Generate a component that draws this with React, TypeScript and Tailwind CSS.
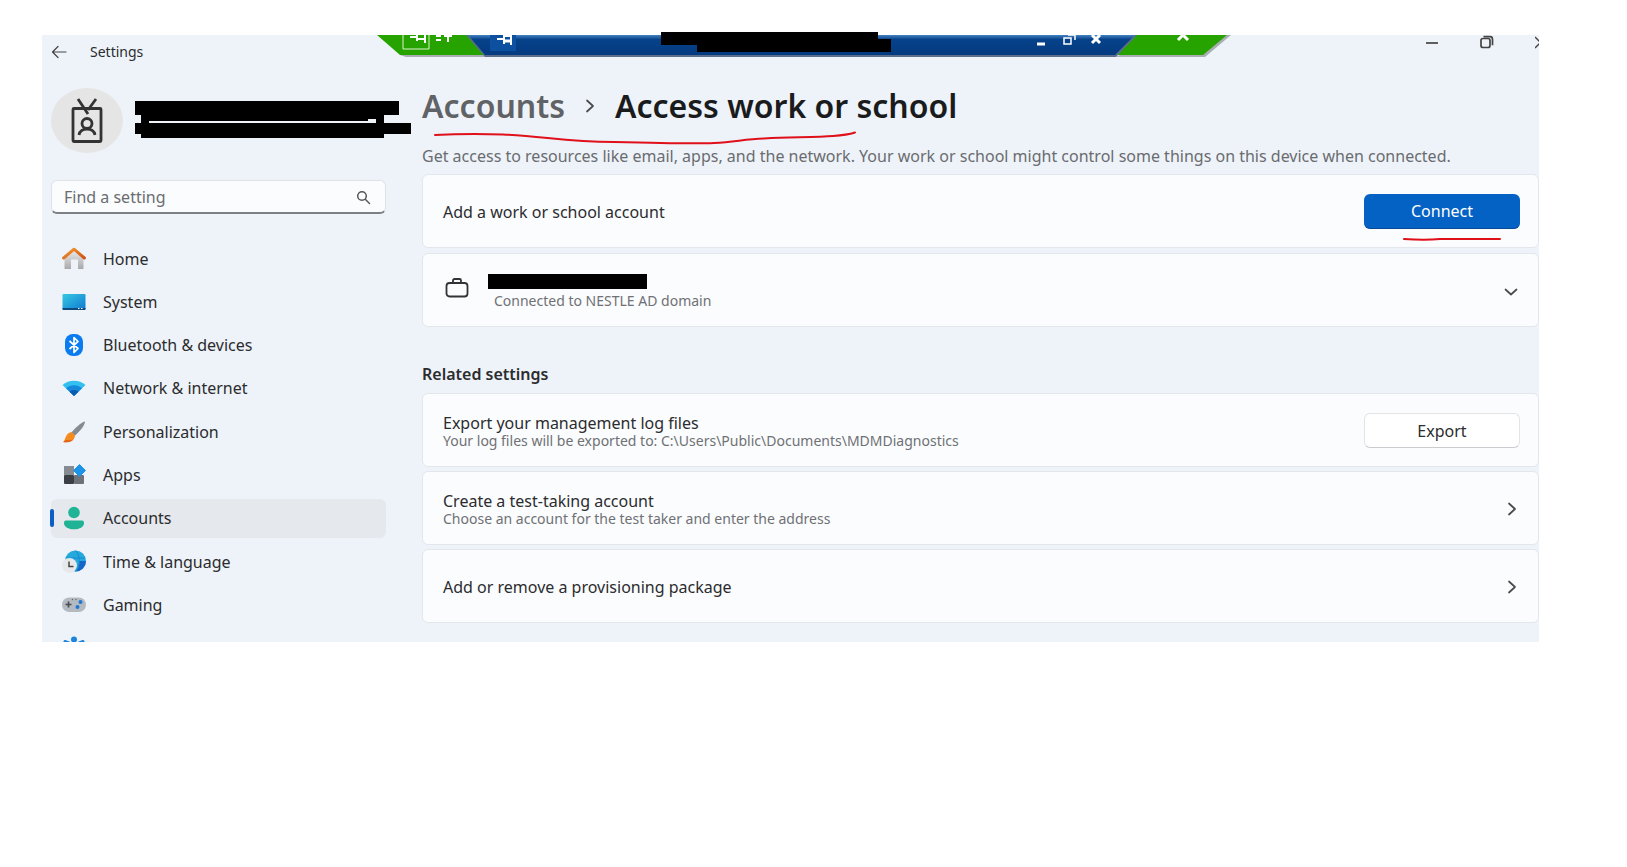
import { type ReactNode } from "react";

type NavItem = { label: string; icon: ReactNode };

const navItems: NavItem[] = [
  {
    label: "Home",
    icon: (
      <svg viewBox="0 0 24 24" className="size-6">
        <defs>
          <linearGradient id="wall" x1="0" y1="0" x2="0" y2="1">
            <stop offset="0" stopColor="#ececec" />
            <stop offset="1" stopColor="#a9a9ac" />
          </linearGradient>
          <linearGradient id="roof" x1="0" y1="0" x2="1" y2="1">
            <stop offset="0" stopColor="#f49a2c" />
            <stop offset="1" stopColor="#d0521c" />
          </linearGradient>
        </defs>
        <path d="M2.5 10 12 3l9.500 7v12H16v-9.500H9V22H2.500z" fill="url(#wall)" />
        <path d="M1.600 11 12 2.200 22.400 11" fill="none" stroke="url(#roof)" strokeWidth="3" strokeLinecap="round" strokeLinejoin="round" />
      </svg>
    ),
  },
  {
    label: "System",
    icon: (
      <svg viewBox="0 0 24 24" className="size-6">
        <defs>
          <linearGradient id="screen" x1="0" y1="0" x2="1" y2="1">
            <stop offset="0" stopColor="#35c9e2" />
            <stop offset="1" stopColor="#0f78d1" />
          </linearGradient>
        </defs>
        <rect x="0.500" y="4" width="23" height="16" rx="1.200" fill="url(#screen)" />
        <path d="M.5 18h23v.8a1.200 1.200 0 0 1-1.200 1.200H1.700A1.200 1.200 0 0 1 .5 18.800z" fill="#0c4a80" />
        <path d="M16 18.500h1.500M19 18.500h1.500" stroke="#fff" strokeWidth="1" />
      </svg>
    ),
  },
  {
    label: "Bluetooth & devices",
    icon: (
      <svg viewBox="0 0 24 24" className="size-6">
        <rect x="3" y="1" width="18" height="22" rx="8" fill="#0a7cf0" />
        <path d="m7.500 8 8.500 7.500-4 4V4.500l4 4L7.500 16" fill="none" stroke="#fff" strokeWidth="1.700" strokeLinejoin="round" />
      </svg>
    ),
  },
  {
    label: "Network & internet",
    icon: (
      <svg viewBox="0 0 24 24" className="size-6">
        <path d="M.5 9C6.500 3.200 17.500 3.200 23.500 9L12 20z" fill="#33bff0" />
        <path d="M4 12.300c4.500-4.200 11.500-4.200 16 0L12 20z" fill="#1588dc" />
        <path d="M7.500 15.700c2.600-2.400 6.400-2.400 9 0L12 20z" fill="#0b5cb0" />
      </svg>
    ),
  },
  {
    label: "Personalization",
    icon: (
      <svg viewBox="0 0 24 24" className="size-6">
        <path d="M23 1.500c-4 1-10.500 7-13.500 11l3.300 3.300C17 12 22.800 6 23 1.500z" fill="#858b92" />
        <path d="M9.500 12 13 15.500c-.5 6-6 7.500-12 6.500 3-1.500 1.500-8.500 8.500-10z" fill="#f58a1f" />
        <path d="M1 22c4.500.8 8 0 10-2.500-3 1-6 1-7.500.5-.5 1-1.200 1.600-2.500 2z" fill="#e05f1a" />
      </svg>
    ),
  },
  {
    label: "Apps",
    icon: (
      <svg viewBox="0 0 24 24" className="size-6">
        <rect x="2" y="3" width="10" height="9" fill="#868b92" />
        <rect x="2" y="12" width="10" height="9" rx="1" fill="#3b3f45" />
        <rect x="12" y="12" width="10" height="9" rx="1" fill="#6d7278" />
        <path d="m17.500 1.500 6 6-6 6-6-6z" fill="#1e94e8" stroke="#1e94e8" strokeLinejoin="round" />
      </svg>
    ),
  },
  {
    label: "Accounts",
    icon: (
      <svg viewBox="0 0 24 24" className="size-6">
        <circle cx="12" cy="6.500" r="5.800" fill="#20b497" />
        <path d="M4 14.500h16c1.500 0 2 1 2 2.400 0 4-4.500 6.300-10 6.300S2 20.900 2 16.900c0-1.400.5-2.400 2-2.400z" fill="#1fb294" />
      </svg>
    ),
  },
  {
    label: "Time & language",
    icon: (
      <svg viewBox="0 0 24 24" className="size-6">
        <circle cx="13.500" cy="11" r="10.500" fill="#25a9dd" />
        <path d="M24 11a10.500 10.500 0 0 1-10.500 10.500c3-2.500 4-6 4-10.500z" fill="#1668c8" />
        <path d="M4 8h19M13.500.5c5 5 5 15 0 21" fill="none" stroke="#1583cc" strokeWidth=".8" />
        <circle cx="7.500" cy="15.500" r="7.500" fill="#e6e8ea" />
        <path d="M7 11.500v5h4.500" fill="none" stroke="#444" strokeWidth="1.500" />
      </svg>
    ),
  },
  {
    label: "Gaming",
    icon: (
      <svg viewBox="0 0 24 24" className="size-6">
        <rect x="0" y="4.500" width="24" height="14.500" rx="7.200" fill="#b4bac2" />
        <path d="M3.500 11.500h6M6.500 8.500v6" stroke="#4a4e54" strokeWidth="1.700" />
        <circle cx="18.500" cy="9" r="2" fill="#1e78d0" />
        <circle cx="15.500" cy="14" r="2" fill="#1e78d0" />
        <circle cx="10.500" cy="6.500" r=".7" fill="#666" />
        <circle cx="14" cy="6.500" r=".7" fill="#666" />
      </svg>
    ),
  },
];

function Redaction({ className }: { className: string }) {
  return <div aria-hidden="true" className={`bg-black ${className}`} />;
}

function Chevron({ down = false }: { down?: boolean }) {
  return (
    <svg viewBox="0 0 16 16" className="size-4" fill="none" stroke="#4a4a4a" strokeWidth="1.700" strokeLinecap="round" strokeLinejoin="round">
      <path d={down ? "m2.500 5.500 5.500 5 5.500-5" : "m5 2.500 6 5.500-6 5.500"} />
    </svg>
  );
}

function RemoteBar() {
  return (
    <svg viewBox="0 0 870 28" className="absolute left-[330px] top-0 h-7 w-[870px]" aria-hidden="true">
      <defs>
        <linearGradient id="bar" x1="0" y1="0" x2="0" y2="1">
          <stop offset="0" stopColor="#4483c0" />
          <stop offset=".22" stopColor="#06428a" />
          <stop offset="1" stopColor="#043a80" />
        </linearGradient>
      </defs>
      <path d="M28 20l6 2h84V2zM743 22h90l26-22h-60z" fill="#8b9096" opacity=".7" />
      <path d="M5 0 28 20h88L96 0zM763 0l-20 20h88L855 0z" fill="#27a300" />
      <path d="M94 0l19 22h631L765 0z" fill="#5b6f8c" />
      <path d="M96 0l17 20h630L763 0z" fill="url(#bar)" />
      <path d="M31 0v14h26V0" fill="none" stroke="#d9f2d0" />
      <path d="M38 2h7M45 0v6M45 4h8M53 0v8" fill="none" stroke="#fff" strokeWidth="2" />
      <path d="M64 1h5M64 5h5M72 1h8M76 0v7" stroke="#fff" strokeWidth="2" />
      <rect x="118" y="0" width="26" height="16" fill="#0c509f" />
      <path d="M125 4h7M132 0v9M132 1h7M139 0v10" fill="none" stroke="#fff" strokeWidth="2" />
      <path d="M132 6h7" stroke="#fff" strokeWidth="3" />
      <path d="M665 9h8" stroke="#fff" strokeWidth="3" />
      <path d="M692 3h7v6h-7zM696 0h7v5" fill="none" stroke="#fff" strokeWidth="1.500" />
      <path d="m720 0 8 8M728 0l-8 8" stroke="#fff" strokeWidth="3" />
      <path d="m806 5 5-5 5 5" fill="none" stroke="#fff" strokeWidth="3" />
    </svg>
  );
}

function WindowControls() {
  return (
    <div className="absolute -right-[10px] top-0 flex gap-[41px] text-[#444]">
      <button type="button" aria-label="Minimize">
        <svg viewBox="0 0 14 14" className="size-[14px]"><path d="M1 8h12" stroke="currentColor" strokeWidth="1.700" /></svg>
      </button>
      <button type="button" aria-label="Restore">
        <svg viewBox="0 0 14 14" className="size-[14px]" fill="none" stroke="currentColor" strokeWidth="1.700">
          <rect x="1" y="3.500" width="9" height="9" rx="2" />
          <path d="M3.500 1.700H10a2.500 2.500 0 0 1 2.500 2.500v6" />
        </svg>
      </button>
      <button type="button" aria-label="Close">
        <svg viewBox="0 0 14 14" className="size-[14px]"><path d="m0 2 11 11M11 2 0 13" stroke="currentColor" strokeWidth="1.500" /></svg>
      </button>
    </div>
  );
}

function Card({ title, detail, action }: { title: string; detail?: string; action: ReactNode }) {
  return (
    <li className="flex h-[74px] items-center justify-between rounded-md border border-[#e3e7ec] bg-[#fbfcfe] pl-5 pr-[18px] pt-px">
      <div>
        <div className="text-base leading-5">{title}</div>
        {detail && <div className="text-sm leading-4 text-[#6f7174]">{detail}</div>}
      </div>
      {action}
    </li>
  );
}

export default function App() {
  return (
    <div className="bg-white pl-[42px] pr-[88px] pt-[35px] font-['Noto_Sans','Open_Sans',sans-serif] text-[#2b2c2e]">
      <div className="relative">
        <div className="relative flex h-[607px] gap-9 overflow-hidden bg-[#eef3f9] pl-[9px]">
          <aside className="w-[335px] shrink-0">
            <div className="flex h-[34px] items-center gap-[23px]">
              <button type="button" aria-label="Back">
                <svg viewBox="0 0 16 16" className="size-4" fill="none" stroke="#444" strokeWidth="1.200" strokeLinecap="round" strokeLinejoin="round">
                  <path d="M15 8H1.500M7 2.500 1.500 8 7 13.500" />
                </svg>
              </button>
              <span className="text-sm">Settings</span>
            </div>

            <div className="mt-[19px] flex gap-3">
              <svg viewBox="0 0 72 65" className="h-[65px] w-[72px] shrink-0">
                <ellipse cx="36" cy="32.500" rx="36" ry="32.500" fill="#e5e5e5" />
                <g fill="none" stroke="#333" strokeWidth="2.800" strokeLinejoin="round">
                  <rect x="22" y="20.500" width="28" height="33" rx="1" />
                  <path d="m27 11 10 15M45 11l-8 11" />
                  <circle cx="36" cy="35.500" r="5" />
                  <path d="M28 47c1-8 15-8 16 0" />
                </g>
              </svg>
              <svg viewBox="0 0 276 40" className="mt-3 h-10 w-[276px] shrink-0" aria-hidden="true">
                <path d="M0 1h264v14h-15v8h27v11h-27v4H6v-4H0V23h6v-8H0zM14 21v2h227v-4h-8v2z" fillRule="evenodd" />
              </svg>
            </div>

            <label className="mt-[27px] flex h-[34px] items-center rounded-md border border-[#dfe3e8] border-b-2 border-b-[#7d8085] bg-[#fbfcfe] pl-3 pr-[14px]">
              <input type="text" aria-label="Find a setting" placeholder="Find a setting" className="min-w-0 flex-1 bg-transparent text-base outline-none placeholder:text-[#6a6c70]" />
              <svg viewBox="0 0 16 16" className="size-4" fill="none" stroke="#555" strokeWidth="1.500" strokeLinecap="round">
                <circle cx="7" cy="7" r="4.300" />
                <path d="m10.500 10.500 4 4" />
              </svg>
            </label>

            <nav className="mt-[25px] flex h-[429px] flex-col justify-between">
              {navItems.map(({ label, icon }) => (
                <a
                  key={label}
                  href="#"
                  aria-current={label === "Accounts" ? "page" : undefined}
                  className="relative flex h-[39px] items-center gap-[17px] rounded-md pl-[11px] aria-[current=page]:bg-[#e5e8ed]"
                >
                  {label === "Accounts" && <span className="absolute -left-px h-[18px] w-1 rounded-full bg-[#0c5ec4]" />}
                  {icon}
                  <span className="text-base">{label}</span>
                </a>
              ))}
              <a href="#" aria-label="Accessibility" className="flex h-[39px] items-center pl-[11px]">
                <svg viewBox="0 0 24 24" className="size-6">
                  <circle cx="12" cy="3.500" r="3" fill="#1b84dc" />
                  <path d="M3 5.500 12 9l9-3.500M12 9v6l-5 7m5-7 5 7" fill="none" stroke="#1b84dc" strokeWidth="3" strokeLinecap="round" />
                </svg>
              </a>
            </nav>
          </aside>

          <main className="min-w-0 flex-1 pt-[51px]">
            <h1 className="flex h-10 items-center gap-[17px] whitespace-nowrap text-[32px] font-semibold text-[#1a1b1d]">
              <a href="#" className="text-[#606265]">Accounts</a>
              <Chevron />
              <span>Access work or school</span>
            </h1>
            <p className="mt-5 whitespace-nowrap text-base leading-5 text-[#6a6c70]">
              Get access to resources like email, apps, and the network. Your work or school might control some things on this device when connected.
            </p>

            <ul className="mt-2 space-y-[5px]">
              <Card
                title="Add a work or school account"
                action={
                  <button type="button" className="relative h-[35px] w-[156px] rounded-md border-b border-[#0a4a92] bg-[#0462c4] text-base text-white">
                    Connect
                    <svg viewBox="0 0 98 6" className="absolute left-[39px] top-[42px] h-[6px] w-[98px]" aria-hidden="true">
                      <path d="M1 3c14 1 26 1 36 0h60" fill="none" stroke="#e0101a" strokeWidth="2" strokeLinecap="round" />
                    </svg>
                  </button>
                }
              />
              <li className="flex h-[74px] items-center rounded-md border border-[#e3e7ec] bg-[#fbfcfe] pl-[22px] pr-[19px] pt-[3px]">
                <svg viewBox="0 0 24 24" className="mb-2 size-6" fill="none" stroke="#333" strokeWidth="1.800">
                  <rect x="1.500" y="7" width="21" height="13.500" rx="3" />
                  <path d="M8 7V4.500A1.500 1.500 0 0 1 9.500 3h5A1.500 1.500 0 0 1 16 4.500V7" />
                </svg>
                <div className="ml-[19px] flex-1">
                  <Redaction className="h-[15px] w-[159px]" />
                  <div className="mt-1 pl-[6px] text-sm leading-4 text-[#6f7174]">Connected to NESTLE AD domain</div>
                </div>
                <button type="button" aria-label="Show details"><Chevron down /></button>
              </li>
            </ul>

            <h2 className="mt-[37px] text-base font-semibold leading-5">Related settings</h2>
            <ul className="mt-[9px] space-y-1">
              <Card
                title="Export your management log files"
                detail="Your log files will be exported to: C:\Users\Public\Documents\MDMDiagnostics"
                action={
                  <button type="button" className="h-[35px] w-[156px] rounded-md border border-[#e3e4e6] border-b-[#c9cbce] bg-white text-base">Export</button>
                }
              />
              <Card
                title="Create a test-taking account"
                detail="Choose an account for the test taker and enter the address"
                action={<button type="button" aria-label="Open test-taking account"><Chevron /></button>}
              />
              <Card
                title="Add or remove a provisioning package"
                action={<button type="button" aria-label="Open provisioning package"><Chevron /></button>}
              />
            </ul>
          </main>

          <RemoteBar />
          <WindowControls />
        </div>

        <svg viewBox="0 0 232 22" className="absolute -top-[3px] left-[619px] h-[22px] w-[232px]" aria-hidden="true">
          <path d="M0 0h217v7h13v13H36v-7H0z" />
        </svg>
        <svg viewBox="0 0 424 14" className="absolute left-[392px] top-[96px] h-[14px] w-[424px]" aria-hidden="true">
          <path d="M1 4c20-1 52-1 68-.5C110 5 130 11 180 11c40 1 80 2 100 1 22-1 30-4 50-4.500 50-2 75-1 91-6" fill="none" stroke="#e0101a" strokeWidth="2" strokeLinecap="round" />
        </svg>
      </div>
    </div>
  );
}
